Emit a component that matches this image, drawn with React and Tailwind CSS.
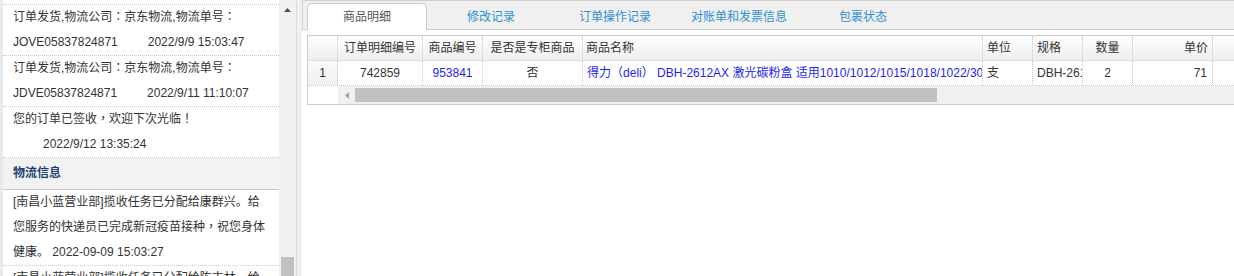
import React from "react";

const FONT = "[font-family:'Liberation_Sans','Noto_Sans_CJK_SC',sans-serif]";
const PUNCT = "[font-family:'Noto_Sans_CJK_TC',sans-serif] leading-none";

function T({ children }) {
  const s = String(children);
  const parts = s.split(/([：！，（）])/);
  return (
    <>
      {parts.map((p, i) =>
        /^[：！，（）]$/.test(p) ? (
          <span key={i} className={PUNCT}>
            {p}
          </span>
        ) : (
          <React.Fragment key={i}>{p}</React.Fragment>
        )
      )}
    </>
  );
}

function Item({ line1, code, time }) {
  return (
    <div className="h-[51px] overflow-hidden border-b border-dotted border-[#c8c8c8] pl-[10px] pr-[12px] leading-[25px]">
      <div className="h-[25px] whitespace-nowrap">
        <T>{line1}</T>
      </div>
      <div className="h-[25px] whitespace-nowrap">
        {code}
        <span className="ml-[30px]">{time}</span>
      </div>
    </div>
  );
}

function Cell({ w, className = "", children, last }) {
  return (
    <div
      className={`${w} shrink-0 h-full flex items-center overflow-hidden whitespace-nowrap ${
        last ? "" : "border-r border-dotted border-[#c8c8c8]"
      } ${className}`}
    >
      {children}
    </div>
  );
}

export default function App() {
  const cols = [
    { w: "w-[30px]" },
    { w: "w-[85px]" },
    { w: "w-[60px]" },
    { w: "w-[100px]" },
    { w: "w-[400px]" },
    { w: "w-[50px]" },
    { w: "w-[50px]" },
    { w: "w-[50px]" },
    { w: "w-[80px]" },
  ];
  return (
    <div className={`w-[1234px] h-[276px] flex overflow-hidden bg-[#f0f0f0] text-[12px] text-[#333] ${FONT}`}>
      {/* left strip */}
      <div className="w-[3px] shrink-0 bg-[#e9e9e9]" />
      {/* left panel */}
      <div className="w-[276px] shrink-0 bg-white overflow-hidden">
        <div className="h-[5px] border-b border-dotted border-[#c8c8c8]" />
        <Item line1="订单发货,物流公司：京东物流,物流单号：" code="JOVE05837824871" time="2022/9/9 15:03:47" />
        <Item line1="订单发货,物流公司：京东物流,物流单号：" code="JDVE05837824871" time="2022/9/11 11:10:07" />
        <Item line1="您的订单已签收，欢迎下次光临！" code="" time="2022/9/12 13:35:24" />
        <div className="h-[32px] bg-[#f2f2f2] border-b border-[#cccccc] pl-[10px] leading-[31px] font-bold text-[#1d3e6e]">
          物流信息
        </div>
        <div className="h-[76px] overflow-hidden border-b border-dotted border-[#c8c8c8] pl-[10px] pr-[12px] leading-[25px]">
          <T>[南昌小蓝营业部]揽收任务已分配给康群兴。给您服务的快递员已完成新冠疫苗接种，祝您身体健康。 2022-09-09 15:03:27</T>
        </div>
        <div className="pl-[10px] pr-[12px] leading-[25px]">
          <T>[南昌小蓝营业部]揽收任务已分配给陈吉林。给您服务的快递员已完成新冠疫苗接种，祝您身体健康。 2022-09-09 15:20:11</T>
        </div>
      </div>
      {/* left scrollbar */}
      <div className="w-[17px] shrink-0 bg-[#f1f1f1] flex flex-col items-center">
        <svg width="7" height="4" viewBox="0 0 7 4" className="mt-[8px]">
          <polygon points="3.5,0 7,4 0,4" fill="#505050" />
        </svg>
        <div className="mt-auto w-[13px] h-[19px] bg-[#c1c1c1]" />
      </div>
      <div className="w-[1px] shrink-0 bg-[#dcdcdc]" />
      <div className="w-[5px] shrink-0 bg-[#f0f0f0]" />
      {/* right panel */}
      <div className="flex-1 flex flex-col overflow-hidden">
        <div className="h-[30px] shrink-0 border-t border-b border-l border-[#d0d0d0] bg-[#f0f0f0] flex items-end pl-[4px]">
          <div className="w-[120px] h-[27px] -mb-px bg-white border border-b-0 border-[#cccccc] rounded-t-[5px] flex items-center justify-center text-[#555]">
            商品明细
          </div>
          {["修改记录", "订单操作记录", "对账单和发票信息", "包裹状态"].map((t) => (
            <div key={t} className="w-[120px] ml-[4px] h-[27px] -mb-px flex items-center justify-center text-[#2f8fcf]">
              {t}
            </div>
          ))}
        </div>
        <div className="flex-1 bg-white pl-[5px] pt-[5px] overflow-hidden">
          <div className="w-[960px] border border-[#cccccc]">
            {/* header */}
            <div className="h-[25px] flex border-b border-[#dddddd] bg-linear-to-b from-white to-[#eeeeee]">
              <Cell w={cols[0].w} />
              <Cell w={cols[1].w} className="justify-center">订单明细编号</Cell>
              <Cell w={cols[2].w} className="justify-center">商品编号</Cell>
              <Cell w={cols[3].w} className="justify-center">是否是专柜商品</Cell>
              <Cell w={cols[4].w} className="pl-[3px]">商品名称</Cell>
              <Cell w={cols[5].w} className="pl-[4px]">单位</Cell>
              <Cell w={cols[6].w} className="pl-[4px]">规格</Cell>
              <Cell w={cols[7].w} className="justify-center">数量</Cell>
              <Cell w={cols[8].w} className="justify-end pr-[4px]">单价</Cell>
              <Cell w="flex-1" last />
            </div>
            {/* data row */}
            <div className="h-[25px] flex border-b border-dotted border-[#c8c8c8]">
              <Cell w={cols[0].w} className="justify-center bg-linear-to-b from-[#fafafa] to-[#f0f0f0]">1</Cell>
              <Cell w={cols[1].w} className="justify-center">742859</Cell>
              <Cell w={cols[2].w} className="justify-center text-[#1f1ff0]">953841</Cell>
              <Cell w={cols[3].w} className="justify-center">否</Cell>
              <Cell w={cols[4].w} className="pl-[4px] text-[#1f1ff0]">
                <span>
                  <T>得力（deli） DBH-2612AX 激光碳粉盒 适用1010/1012/1015/1018/1022/3010/3020/3050</T>
                </span>
              </Cell>
              <Cell w={cols[5].w} className="pl-[4px]">支</Cell>
              <Cell w={cols[6].w} className="pl-[4px]">DBH-2612AX</Cell>
              <Cell w={cols[7].w} className="justify-center">2</Cell>
              <Cell w={cols[8].w} className="justify-end pr-[5px]">71</Cell>
              <Cell w="flex-1" last />
            </div>
            {/* horizontal scrollbar */}
            <div className="h-[18px] flex">
              <div className="w-[30px] shrink-0 bg-white" />
              <div className="flex-1 bg-[#f0f0f0] flex items-center">
                <div className="w-[17px] flex items-center justify-center">
                  <svg width="4" height="7" viewBox="0 0 4 7">
                    <polygon points="0,3.5 4,0 4,7" fill="#a3a3a3" />
                  </svg>
                </div>
                <div className="w-[582px] h-[14px] bg-[#c1c1c1]" />
              </div>
            </div>
          </div>
        </div>
      </div>
    </div>
  );
}
